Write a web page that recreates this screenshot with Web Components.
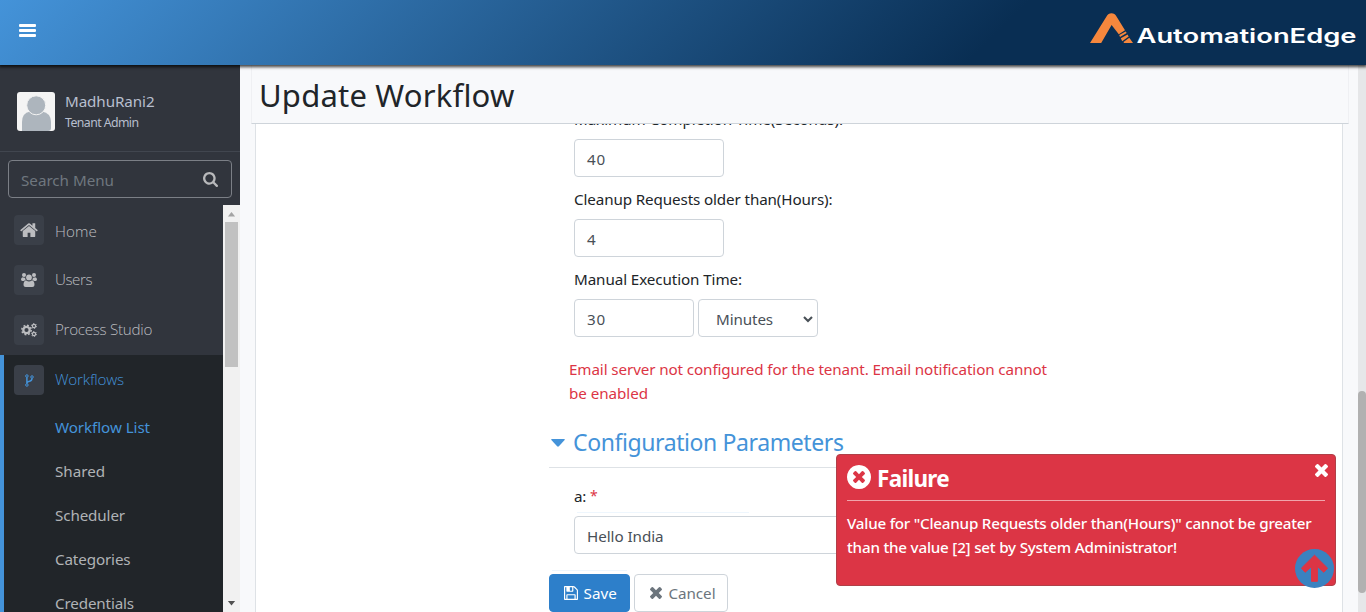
<!DOCTYPE html>
<html lang="en">
<head>
<meta charset="utf-8">
<title>Update Workflow</title>
<style>
html, body { margin: 0; height: 100%; overflow: hidden; }
body { font: 15.2px/24px "Noto Sans", "Open Sans", sans-serif; color: #212529; background: #f8f9fb; }
</style>
</head>
<body>
<app-shell></app-shell>
<script>
const define = (name, html, setup) => {
  const template = document.createElement('template');
  template.innerHTML = html;
  customElements.define(name, class extends HTMLElement {
    constructor() {
      super();
      this.attachShadow({ mode: 'open' }).append(template.content.cloneNode(true));
    }
    connectedCallback() { if (setup) setup(this, this.shadowRoot); }
  });
};

/* Icons, on a 1792-unit grid unless a viewBox is given */
const ICONS = {
  bars: ['0 0 17 13', '<path d="M1 0h15q1 0 1 1v1q0 1-1 1H1Q0 3 0 2V1Q0 0 1 0zM1 5h15q1 0 1 1v1q0 1-1 1H1Q0 8 0 7V6Q0 5 1 5zM1 10h15q1 0 1 1v1q0 1-1 1H1q-1 0-1-1v-1q0-1 1-1z"/>'],
  home: ['64 230 1664 1312', '<path d="M1472 992v480q0 26-19 45t-45 19h-384v-384h-256v384h-384q-26 0-45-19t-19-45v-480q0-1 .5-3t.5-3l575-474 575 474q1 2 1 6zm223-69l-62 74q-8 9-21 11h-3q-13 0-21-7l-692-577-692 577q-12 8-24 7-13-2-21-11l-62-74q-8-10-7-23.5t11-21.5l719-599q32-26 76-26t76 26l244 204v-195q0-14 9-23t23-9h192q14 0 23 9t9 23v408l219 182q10 8 11 21.5t-7 23.5z"/>'],
  search: ['64 128 1664 1664', '<path d="M1216 832q0-185-131.5-316.5t-316.5-131.5-316.5 131.5-131.5 316.5 131.5 316.5 316.5 131.5 316.5-131.5 131.5-316.5zm512 832q0 52-38 90t-90 38q-54 0-90-38l-343-342q-179 124-399 124-143 0-273.5-55.5t-225-150-150-225-55.5-273.5 55.5-273.5 150-225 225-150 273.5-55.5 273.5 55.5 225 150 150 225 55.5 273.5q0 220-124 399l343 343q37 37 37 90z"/>'],
  users: ['0 0 16 14', '<circle cx="3" cy="2" r="2"/><circle cx="13" cy="2" r="2"/><path d="M1.7 4.3q1.200.7 2.600.2Q3.800 6 4.900 7.200 3.500 7.300 2.700 8H1.400Q0 8 0 6.600 0 4.400 1.700 4.300zM14.300 4.300q-1.200.7-2.600.2.500 1.500-.6 2.700 1.400.1 2.200.8h1.300q1.400 0 1.400-1.400 0-2.200-1.700-2.300z"/><circle cx="8" cy="4.400" r="2.900"/><path d="M5.200 7.600Q8 9.400 10.800 7.600q2.700.2 2.700 4.300 0 2.100-2.200 2.100H4.700q-2.200 0-2.200-2.100 0-4.100 2.700-4.300z"/>'],
  cogs: ['0 0 16 14', '<g fill="none" stroke="currentColor"><circle cx="5.500" cy="7" r="3.200" stroke-width="2.300"/><circle cx="5.500" cy="7" r="4.700" stroke-width="1.500" stroke-dasharray="1.850 1.841"/><circle cx="13" cy="3" r="1.600" stroke-width="1.200"/><circle cx="13" cy="3" r="2.500" stroke-width="1" stroke-dasharray="1.300 1.318"/><circle cx="13" cy="11" r="1.600" stroke-width="1.200"/><circle cx="13" cy="11" r="2.500" stroke-width="1" stroke-dasharray="1.300 1.318"/></g>'],
  fork: ['0 0 9 13', '<g fill="none" stroke="currentColor" stroke-width="1"><circle cx="1.900" cy="2" r="1.250"/><circle cx="1.900" cy="11" r="1.250"/><circle cx="7" cy="3" r="1.250"/></g><path d="M1.900 3.200v6.600M7 4.200q0 2.300-2.500 3.100-2.600.7-2.600 2" fill="none" stroke="currentColor" stroke-width="1.500"/>'],
  times: ['302 366 1188 1188', '<path d="M1490 1322q0 40-28 68l-136 136q-28 28-68 28t-68-28l-294-294-294 294q-28 28-68 28t-68-28l-136-136q-28-28-28-68t28-68l294-294-294-294q-28-28-28-68t28-68l136-136q28-28 68-28t68 28l294 294 294-294q28-28 68-28t68 28l136 136q28 28 28 68t-28 68l-294 294 294 294q28 28 28 68z"/>'],
  failure: ['128 128 1536 1536', '<path d="M1277 1122q0-26-19-45l-181-181 181-181q19-19 19-45 0-27-19-46l-90-90q-19-19-46-19-26 0-45 19l-181 181-181-181q-19-19-45-19-27 0-46 19l-90 90q-19 19-19 46 0 26 19 45l181 181-181 181q-19 19-19 45 0 27 19 46l90 90q19 19 46 19 26 0 45-19l181-181 181 181q19 19 45 19 27 0 46-19l90-90q19-19 19-46zm387-226q0 209-103 385.500t-279.500 279.500-385.500 103-385.500-103-279.500-279.500-103-385.500 103-385.500 279.500-279.500 385.500-103 385.500 103 279.500 279.500 103 385.500z"/>'],
  save: ['128 128 1536 1536', '<path d="M512 1536h768v-384h-768v384zm896 0h128v-896q0-14-10-38.500t-20-34.500l-281-281q-10-10-34-20t-39-10v416q0 40-28 68t-68 28h-576q-40 0-68-28t-28-68v-416h-128v1280h128v-416q0-40 28-68t68-28h832q40 0 68 28t28 68v416zm-384-928v-320q0-13-9.500-22.500t-22.500-9.500h-192q-13 0-22.500 9.500t-9.500 22.500v320q0 13 9.500 22.500t22.500 9.500h192q13 0 22.500-9.500t9.500-22.500zm640 32v928q0 40-28 68t-68 28h-1344q-40 0-68-28t-28-68v-1344q0-40 28-68t68-28h928q40 0 88 20t76 48l280 280q28 28 48 76t20 88z"/>'],
  caret: ['0 0 14 9', '<path d="M.7 0h12.600q1 .3.300 1.200L7.900 8.200q-.9.900-1.800 0L.4 1.200Q-.3.300.7 0z"/>'],
  chevron: ['0 0 10 7', '<path d="M1 1l4 4 4-4" fill="none" stroke="currentColor" stroke-width="2.100"/>'],
  up: ['0 0 10 5', '<path d="M5 0l4 4.500H1z"/>'],
  down: ['0 0 10 5', '<path d="M5 4.500L1 0h8z"/>'],
  top: ['0 0 39 39', '<circle cx="19.500" cy="19.500" r="19.500" fill="#3a82c0"/><path d="M19.500 6.200L32.600 19.200 28.800 23.300 22.400 17.500V32.300H16.500V17.500L10.200 23.300 6.400 19.200z" fill="#dc3545" stroke="#dc3545" stroke-linejoin="round"/>'],
};

define('ui-icon', `<style>
  :host { display: block; flex: none; line-height: 0; }
  svg { display: block; width: 100%; height: 100%; fill: currentColor; overflow: visible; }
</style><svg preserveAspectRatio="none"></svg>`, (el, root) => {
  const [box, body] = ICONS[el.getAttribute('name')];
  const svg = root.querySelector('svg');
  svg.setAttribute('viewBox', box);
  svg.innerHTML = body;
  el.style.width = el.getAttribute('w') + 'px';
  el.style.height = el.getAttribute('h') + 'px';
});

/* One line of text, tracked to a set width */
define('fit-text', `<style>
  :host { display: inline-block; white-space: nowrap; flex: none; }
</style><slot></slot>`, el => {
  const natural = el.getBoundingClientRect().width;
  el.style.letterSpacing = (el.getAttribute('w') - natural) / el.textContent.length + 'px';
});

define('brand-logo', `<style>
  :host { display: block; width: 268px; height: 40px; }
  svg { display: block; overflow: visible; }
  text { font: 600 19.5px Inter, "Open Sans", sans-serif; fill: #fff; }
</style>
<svg width="268" height="40" viewBox="0 0 268 40">
  <path fill="#f5873d" d="M0 30L16.500 3.500Q18.300.2 21.500.2t5 3.300L35 17.300 28.800 21.300 21.600 11.900 11.200 30z"/>
  <path fill="#f5873d" d="M29.200 22L35.700 18.400 36.700 20 30 23.900zM30.800 25.200L37.500 21.400 38.700 23.600 32.200 28.200zM33.500 29.100L39.300 24.700 43 30H34z"/>
  <text x="46.500" y="29.800" textLength="220" lengthAdjust="spacingAndGlyphs">AutomationEdge</text>
</svg>`);

define('top-bar', `<style>
  :host { display: flex; justify-content: space-between; align-items: flex-start; box-sizing: border-box;
    height: 65px; padding: 13px 8px 0 19px; color: #fff; position: relative; z-index: 2;
    background: linear-gradient(135deg, #4493d9, #092e53 72%); box-shadow: 0 1px 3px 1px rgba(0,0,0,.75); }
  ui-icon { margin-top: 11px; }
</style><ui-icon name="bars" w="17" h="13"></ui-icon><brand-logo></brand-logo>`);

define('user-card', `<style>
  :host { display: flex; box-sizing: border-box; height: 87px; padding: 27px 17px 0; gap: 10px;
    border-bottom: 1px solid #41464f; color: #b8bfce; }
  .pic { width: 38px; height: 39px; flex: none; }
  .who { display: flex; flex-direction: column; margin-top: -3px; }
  .role { font-size: 12.3px; line-height: 18px; margin-top: 1px; }
</style>
<svg class="pic" viewBox="0 0 38 39"><rect width="38" height="39" rx="3" fill="#f4f4f4"/>
<path d="M5 39V30q0-9 8-10.500h12q9 1.500 9 10.500v6q0 3-3 3z" fill="#adb5bd"/>
<circle cx="19.200" cy="13.300" r="9.500" fill="#adb5bd" stroke="#f4f4f4"/></svg>
<div class="who"><div class="name"><fit-text w="89.500">MadhuRani2</fit-text></div>
<div class="role"><fit-text w="73.500">Tenant Admin</fit-text></div></div>`);

define('menu-search', `<style>
  :host { display: flex; align-items: center; justify-content: space-between; box-sizing: border-box;
    height: 38px; margin: 8px 8px 7px; padding: 2px 13px 0 12px; border: 1px solid #7b7f86; border-radius: 4px; color: #6f777f; }
  ui-icon { color: #b8b9bb; margin-top: -2px; }
</style><fit-text w="93">Search Menu</fit-text><ui-icon name="search" w="15" h="15"></ui-icon>`);

define('menu-item', `<style>
  :host { display: flex; align-items: center; height: 50px; padding-left: 14px; color: #bcbdc0;
    font-family: "Open Sans", "Noto Sans", sans-serif; font-weight: 300; }
  :host([active]) { color: #4493d9; padding-left: 10px; }
  .tile { display: grid; place-items: center; width: 30px; height: 30px; border-radius: 4px; background: #3a3f48; margin-right: 11px; }
  .label { padding-bottom: 2px; }
  :host([low]) .label { padding: 2px 0 0; }
</style><span class="tile"><slot name="icon"></slot></span><span class="label"><slot></slot></span>`);

define('sub-item', `<style>
  :host { display: flex; align-items: center; height: 44px; padding-left: 51px; color: #b0b3b6; }
  :host([active]) { color: #4493d9; }
</style><slot></slot>`);

define('menu-scrollbar', `<style>
  :host { display: flex; flex-direction: column; align-items: center; width: 17px; background: #f1f1f1; flex: none; }
  .thumb { width: 13px; height: 145px; background: #c1c1c1; margin-top: 5px; }
  .up { color: #a3a3a3; margin-top: 7px; } .down { color: #505050; margin-top: auto; margin-bottom: 6px; }
</style><ui-icon class="up" name="up" w="9" h="5"></ui-icon><div class="thumb"></div><ui-icon class="down" name="down" w="9" h="5"></ui-icon>`);

define('side-bar', `<style>
  :host { display: flex; flex-direction: column; width: 240px; flex: none; background: #31353d; }
  .scroll { display: flex; flex: 1; min-height: 0; }
  nav { flex: 1; overflow: hidden; }
  .group { background: #212529; border-left: 4px solid #4493d9; }
</style>
<user-card></user-card>
<menu-search></menu-search>
<div class="scroll"><nav>
  <menu-item low><ui-icon slot="icon" name="home" w="18" h="14"></ui-icon><fit-text w="42">Home</fit-text></menu-item>
  <menu-item><ui-icon slot="icon" name="users" w="16" h="14"></ui-icon><fit-text w="37">Users</fit-text></menu-item>
  <menu-item><ui-icon slot="icon" name="cogs" w="16" h="14"></ui-icon><fit-text w="97">Process Studio</fit-text></menu-item>
  <div class="group">
    <menu-item active><ui-icon slot="icon" name="fork" w="9" h="13"></ui-icon><fit-text w="69">Workflows</fit-text></menu-item>
    <sub-item active><fit-text w="95">Workflow List</fit-text></sub-item>
    <sub-item><fit-text w="50">Shared</fit-text></sub-item>
    <sub-item><fit-text w="70">Scheduler</fit-text></sub-item>
    <sub-item><fit-text w="75.500">Categories</fit-text></sub-item>
    <sub-item><fit-text w="79">Credentials</fit-text></sub-item>
  </div>
</nav><menu-scrollbar></menu-scrollbar></div>`);

define('page-title', `<style>
  :host { display: block; box-sizing: border-box; height: 59px; margin: 0 9px 0 11px; padding: 9px 0 0 7px;
    border: 1px solid #eff0f3; border-top: 0; border-bottom: 1px solid #ced4da; background: #f8f9fb; }
  h1 { margin: 0; font-size: 31px; line-height: 42px; font-weight: 450; }
</style><h1><slot></slot></h1>`);

define('form-box', `<style>
  :host { display: flex; align-items: center; justify-content: space-between; box-sizing: border-box; height: 38px;
    padding: 2px 4px 0 12px; border: 1px solid #ced4da; border-radius: 4px; background: #fff; color: #495057; }
  :host([kind=select]) { padding-left: 17px; }
  ui-icon { margin-top: -3px; }
</style><slot></slot><slot name="end"></slot>`);

define('form-field', `<style>
  :host { display: block; margin-bottom: 10px; }
  .label { height: 24px; margin-bottom: 8px; }
  .row { display: flex; gap: 4px; }
</style><div class="label"><slot name="label"></slot></div><div class="row"><slot></slot></div>`);

define('ui-button', `<style>
  :host { display: flex; align-items: center; box-sizing: border-box; height: 38px; padding: 0 12px 0 14px; gap: 5.500px;
    border: 1px solid #ced4da; border-radius: 4px; background: #fff; color: #6c757d; }
  :host([primary]) { background: #2d7fca; border-color: #2d7fca; color: #fff; }
</style><slot></slot>`);

define('workflow-form', `<style>
  :host { display: block; width: 501px; margin-left: 293px; }
  .fields { padding-left: 25px; margin-top: -17px; }
  .alert { color: #dc3545; padding-left: 20px; margin-top: 20px; height: 48px; display: flex; flex-direction: column; align-items: flex-start; }
  .section { display: flex; align-items: center; box-sizing: border-box; height: 63px; gap: 8px; padding: 11px 0 0 2px;
    border-bottom: 1px solid #dee2e6; color: #4493d9; font-size: 23px; line-height: 36px; }
  .param { padding-left: 25px; margin-top: 16px; }
  .name { display: flex; gap: 4px; height: 24px; }
  .req { color: #dc3545; font-size: 14px; }
  .hint { width: 172px; height: 1px; margin: 4px 0 3px 3px; background: #eef6fd; }
  .hint.low { width: 75px; margin: 16px 0 3px 3px; }
  .actions { display: flex; gap: 4px; }
</style>
<div class="fields">
  <form-field><fit-text slot="label" w="269">Maximum Completion Time(Seconds):</fit-text><form-box style="width:150px"><fit-text w="19">40</fit-text></form-box></form-field>
  <form-field><fit-text slot="label" w="258.500">Cleanup Requests older than(Hours):</fit-text><form-box style="width:150px"><fit-text w="10">4</fit-text></form-box></form-field>
  <form-field><fit-text slot="label" w="168">Manual Execution Time:</fit-text><form-box style="width:120px"><fit-text w="19">30</fit-text></form-box><form-box kind="select" style="width:120px"><fit-text w="57">Minutes</fit-text><ui-icon slot="end" name="chevron" w="10" h="7"></ui-icon></form-box></form-field>
</div>
<div class="alert"><fit-text w="478">Email server not configured for the tenant. Email notification cannot</fit-text><fit-text w="79">be enabled</fit-text></div>
<div class="section"><ui-icon name="caret" w="14" h="8" style="margin-top:2px"></ui-icon><fit-text w="270.500">Configuration Parameters</fit-text></div>
<div class="param">
  <div class="name"><fit-text w="12">a:</fit-text><span class="req">*</span></div>
  <div class="hint"></div>
  <form-box><fit-text w="76.500">Hello India</fit-text></form-box>
</div>
<div class="hint low"></div>
<div class="actions">
  <ui-button primary style="width:81px"><ui-icon name="save" w="14" h="14"></ui-icon><fit-text w="33.500">Save</fit-text></ui-button>
  <ui-button style="width:94px"><ui-icon name="times" w="12" h="12" style="margin:0 1px"></ui-icon><fit-text w="47">Cancel</fit-text></ui-button>
</div>`);

define('main-panel', `<style>
  :host { display: flex; flex-direction: column; flex: 1; min-width: 0; background: #f8f9fb; }
  .view { flex: 1; min-height: 0; overflow: hidden; }
  .card { height: 700px; margin: 0 15px 0 15px; border: solid #dee2e6; border-width: 0 1px; background: #fff; box-sizing: border-box; display: flow-root; }
</style><page-title><fit-text w="255.500">Update Workflow</fit-text></page-title>
<div class="view"><div class="card"><workflow-form></workflow-form></div></div>`);

define('page-scrollbar', `<style>
  :host { display: block; width: 8px; flex: none; background: #e6e7e9; }
  .thumb { width: 8px; height: 202px; margin-top: 326px; border-radius: 4px; background: #b1b1b1; }
</style><div class="thumb"></div>`);

define('toast-message', `<style>
  :host { display: block; position: absolute; z-index: 3; left: 836px; top: 454px; width: 500px; height: 132px; box-sizing: border-box;
    padding: 7px 10px; border: 1px solid #b04048; border-radius: 4px; background: #dc3545; color: #fff; }
  header { display: flex; gap: 6px; height: 38px; border-bottom: 1px solid #f0a5ac; font-weight: 700; font-size: 22.500px; line-height: 34px; }
  .x { margin-left: auto; margin-right: -3px; margin-top: 2px; }
  .msg { display: flex; flex-direction: column; align-items: flex-start; padding-top: 10px; font-weight: 500; }
</style>
<header><ui-icon name="failure" w="24" h="24" style="margin-top:3px"></ui-icon><fit-text w="72">Failure</fit-text><ui-icon class="x" name="times" w="13" h="13"></ui-icon></header>
<div class="msg"><fit-text w="464.500">Value for "Cleanup Requests older than(Hours)" cannot be greater</fit-text><fit-text w="330">than the value [2] set by System Administrator!</fit-text></div>`);

define('app-shell', `<style>
  :host { display: flex; flex-direction: column; height: 612px; width: 1366px; position: relative; overflow: hidden; }
  .body { display: flex; flex: 1; min-height: 0; }
  .to-top { position: absolute; z-index: 4; left: 1295px; top: 549px; }
</style><top-bar></top-bar>
<div class="body"><side-bar></side-bar><main-panel></main-panel><page-scrollbar></page-scrollbar></div>
<toast-message></toast-message><ui-icon class="to-top" name="top" w="39" h="39"></ui-icon>`);
</script>
</body>
</html>
